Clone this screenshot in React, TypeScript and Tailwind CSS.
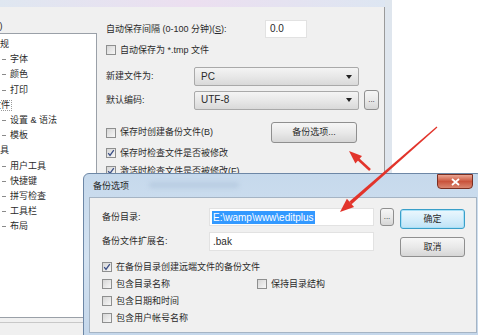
import React from "react";

const Check: React.FC<{ checked?: boolean }> = ({ checked }) => (
  <span className="w-[10px] h-[10px] border border-[#8e8f8f] bg-linear-to-br from-[#d6d6d6] to-[#f7f7f7] flex items-center justify-center shrink-0">
    {checked && (
      <svg width="8" height="8" viewBox="0 0 8 8">
        <path d="M1.2 4.2 L3 6.4 L6.8 1.2" stroke="#3b4f86" strokeWidth="1.3" fill="none" />
      </svg>
    )}
  </span>
);

const CheckRow: React.FC<{ checked?: boolean; label: string; className?: string }> = ({ checked, label, className }) => (
  <div className={`flex items-center gap-[4px] ${className ?? ""}`}>
    <Check checked={checked} />
    <span>{label}</span>
  </div>
);

const Combo: React.FC<{ value: string }> = ({ value }) => (
  <div className="w-[165px] h-[19px] border border-[#a9a9a9] rounded-[2px] bg-linear-to-b from-[#f4f4f4] via-[#e8e8e8] to-[#d9d9d9] flex items-center px-[6px] text-[10px]">
    <span className="flex-1">{value}</span>
    <svg width="6" height="4" viewBox="0 0 6 4">
      <path d="M0 0 L6 0 L3 4 Z" fill="#222" />
    </svg>
  </div>
);

const Btn: React.FC<{ label: string; className?: string }> = ({ label, className }) => (
  <div
    className={`border border-[#8f8f8f] rounded-[3px] bg-linear-to-b from-[#f6f6f6] via-[#e9e9e9] to-[#d6d6d6] flex items-center justify-center ${className ?? ""}`}
  >
    {label}
  </div>
);

const tree: { text: string; top?: boolean; focus?: boolean }[] = [
  { text: "常规", top: true },
  { text: "字体" },
  { text: "颜色" },
  { text: "打印" },
  { text: "文件", top: true, focus: true },
  { text: "设置 & 语法" },
  { text: "模板" },
  { text: "工具", top: true },
  { text: "用户工具" },
  { text: "快捷键" },
  { text: "拼写检查" },
  { text: "工具栏" },
  { text: "布局" },
];

export default function App() {
  return (
    <div className="relative w-[478px] h-[335px] overflow-hidden bg-white text-[9px] leading-none text-[#2a2a2a] font-['Liberation_Sans','Noto_Sans_CJK_SC',sans-serif]">
      {/* main preferences window */}
      <div className="w-[392px] flex flex-col border-r-[7px] border-[#dfe6ee]">
        <div className="h-[7px] bg-linear-to-r from-[#dfe7f1] via-[#ecdff0] to-[#dde6f2]" />
        <div className="flex bg-[#f0f0f0] border-r border-[#9a9a9a] h-[328px]">
          {/* category tree */}
          <div className="w-[97px] shrink-0 flex flex-col">
            <div className="h-[26px] flex items-center ml-[-28px] pt-[12px]">类别(D)</div>
            <div className="h-[285px] bg-white border-y border-r border-[#9aa0a8] flex flex-col pt-[3px]">
              {tree.map((t) => (
                <div key={t.text} className="h-[15.2px] flex items-center shrink-0">
                  {t.top ? (
                    <span className={`ml-[-10px] px-[1px] ${t.focus ? "border border-dotted border-[#9a9a9a]" : ""}`}>
                      {t.text}
                    </span>
                  ) : (
                    <>
                      <span className="ml-[2px] w-[4px] border-t border-[#8a8a8a]" />
                      <span className="ml-[4px]">{t.text}</span>
                    </>
                  )}
                </div>
              ))}
            </div>
            <div className="mt-[4px] border-t border-[#c8c8c8]" />
          </div>

          {/* settings */}
          <div className="flex-1 pl-[9px] flex flex-col">
            <div className="mt-[13px] h-[18px] flex items-center">
              <span className="w-[159px]">
                自动保存间隔 (0-100 分钟)(<u>S</u>):
              </span>
              <div className="w-[42px] h-[18px] bg-white border border-[#e2e2e2] flex items-center pl-[4px] text-[10px]">0.0</div>
            </div>
            <CheckRow className="mt-[5px] h-[14px]" label="自动保存为 *.tmp 文件" />
            <div className="mt-[10px] flex items-center">
              <span className="w-[88px]">新建文件为:</span>
              <Combo value="PC" />
            </div>
            <div className="mt-[4px] flex items-center">
              <span className="w-[88px]">默认编码:</span>
              <Combo value="UTF-8" />
              <Btn label="..." className="ml-[5px] w-[15px] h-[20px] text-[8px]" />
            </div>
            <div className="mt-[12px] flex items-center h-[21px]">
              <CheckRow className="w-[165px]" label="保存时创建备份文件(B)" />
              <Btn label="备份选项..." className="w-[86px] h-[21px]" />
            </div>
            <CheckRow checked className="mt-[3px] h-[14px]" label="保存时检查文件是否被修改" />
            <CheckRow checked className="mt-[4px] h-[14px]" label="激活时检查文件是否被修改(F)" />
          </div>
        </div>
      </div>

      {/* backup options dialog */}
      <div className="absolute left-[83px] top-[173px] w-[400px] h-[170px] border border-[#6d87a6] rounded-t-[6px] bg-linear-to-b from-[#c6d9ec] via-[#d3e2f1] to-[#c3d6ea] flex flex-col px-[5px]">
        <div className="h-[23px] flex items-start">
          <span className="mt-[8px] ml-[4px] text-[#1e1e1e]">备份选项</span>
          <span className="mt-[8px] ml-[20px] w-[90px] h-[6px] rounded-full bg-[#b9cde2] blur-[2px]" />
          <div className="ml-auto mr-[4px] w-[36px] h-[15px] rounded-b-[4px] border border-[#7a2f22] bg-linear-to-b from-[#eaa592] via-[#c9533c] to-[#d98670] flex items-center justify-center">
            <svg width="9" height="8" viewBox="0 0 9 8">
              <path d="M1 1 L8 7 M8 1 L1 7" stroke="#fff" strokeWidth="1.8" />
            </svg>
          </div>
        </div>
        <div className="h-[136px] bg-[#f0f0f0] border border-[#a5b4c4] flex flex-col">
          <div className="flex">
            <div className="flex flex-col pl-[12px] pt-[10px]">
              <div className="flex items-center h-[18px]">
                <span className="w-[107px]">备份目录:</span>
                <div className="w-[165px] h-[18px] bg-white border border-[#e2e2e2] flex items-center pl-[2px] text-[10px]">
                  <span className="bg-[#3399ff] text-white px-[1px] leading-[13px]">E:\wamp\www\editplus</span>
                </div>
                <Btn label="..." className="ml-[6px] w-[14px] h-[18px] text-[8px]" />
              </div>
              <div className="mt-[6px] flex items-center h-[19px]">
                <span className="w-[107px]">备份文件扩展名:</span>
                <div className="w-[165px] h-[19px] bg-white border border-[#e2e2e2] flex items-center pl-[3px] text-[10px]">.bak</div>
              </div>
            </div>
            <div className="ml-[6px] pt-[11px] flex flex-col gap-[8px]">
              <div className="w-[65px] h-[20px] rounded-[3px] border border-[#3a9fc9] bg-linear-to-b from-[#ecf7fd] via-[#d6eefb] to-[#bfe3f6] flex items-center justify-center shadow-[inset_0_0_0_1px_#a8e0f7]">
                确定
              </div>
              <Btn label="取消" className="w-[65px] h-[20px]" />
            </div>
          </div>
          <div className="mt-[2px] pl-[12px] flex flex-col gap-[1px]">
            <CheckRow checked className="h-[16px]" label="在备份目录创建远端文件的备份文件" />
            <div className="h-[16px] flex items-center">
              <CheckRow className="w-[155px]" label="包含目录名称" />
              <CheckRow label="保持目录结构" />
            </div>
            <CheckRow className="h-[16px]" label="包含日期和时间" />
            <CheckRow className="h-[16px]" label="包含用户帐号名称" />
          </div>
        </div>
      </div>

      {/* red annotation arrows */}
      <svg className="absolute inset-0 pointer-events-none" width="478" height="335" viewBox="0 0 478 335">
        <line x1="370" y1="170" x2="357" y2="158" stroke="#e2342b" strokeWidth="2.6" />
        <polygon points="349,151 362,156 355.4,163.4" fill="#e2342b" />
        <polygon points="437.4,127.4 436.6,126.6 349.4,201.4 351.6,204.2" fill="#e2342b" />
        <polygon points="340,212 354.1,206.9 346.9,198.7" fill="#e2342b" />
      </svg>
    </div>
  );
}
